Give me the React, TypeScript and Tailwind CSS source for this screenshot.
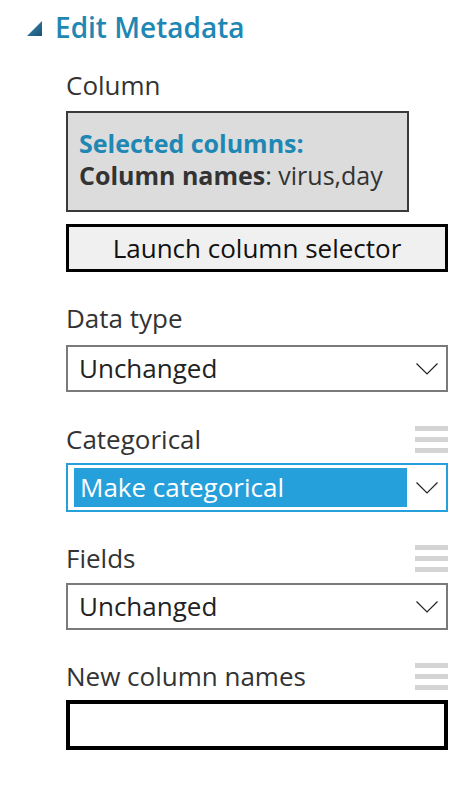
import React from "react";

const font = { fontFamily: '"Open Sans", "Noto Sans", sans-serif' };

// Little grey three-bar handle shown to the right of some labels.
function Handle() {
  return (
    <div className="flex w-[33px] flex-col gap-[6px]">
      <div className="h-[5px] bg-[#d4d4d4]" />
      <div className="h-[5px] bg-[#d4d4d4]" />
      <div className="h-[5px] bg-[#d4d4d4]" />
    </div>
  );
}

function Chevron() {
  return (
    <svg width="22" height="12" viewBox="0 0 22 12" fill="none" className="shrink-0">
      <path d="M0.5 0.5 L11 11 L21.5 0.5" stroke="#222" strokeWidth="1.2" />
    </svg>
  );
}

function Label({ text, handle, className = "" }: { text: string; handle?: boolean; className?: string }) {
  return (
    <div className={`flex h-[32px] items-center justify-between ${className}`}>
      <span className="text-[26px] leading-[32px] text-[#333]">{text}</span>
      {handle && <Handle />}
    </div>
  );
}

function Select({ value, active }: { value: string; active?: boolean }) {
  if (active) {
    return (
      <div className="flex h-[49px] items-center border-2 border-[#26a0da] py-[3px] pl-[6px] pr-[8px]">
        <div className="flex h-full flex-1 items-center bg-[#26a0da] pl-[6px] text-[26px] text-white">
          {value}
        </div>
        <div className="ml-[9px]">
          <Chevron />
        </div>
      </div>
    );
  }
  return (
    <div className="flex h-[47px] items-center justify-between border-2 border-[#7a7a7a] pl-[11px] pr-[8px]">
      <span className="text-[26px] text-[#222]">{value}</span>
      <Chevron />
    </div>
  );
}

export default function App() {
  return (
    <div className="h-[794px] w-[476px] bg-white pt-[9px]" style={font}>
      <div className="flex items-center pl-[27px]">
        <svg width="15" height="15" viewBox="0 0 15 15" className="mt-[3px]">
          <defs>
            <linearGradient id="tri" x1="0" y1="0" x2="1" y2="1">
              <stop offset="0" stopColor="#3a8fbf" />
              <stop offset="1" stopColor="#1b4f72" />
            </linearGradient>
          </defs>
          <polygon points="15,0 15,15 0,15" fill="url(#tri)" />
        </svg>
        <h1 className="ml-[13px] text-[28px] font-semibold leading-[36px] text-[#1e87b4]">Edit Metadata</h1>
      </div>

      <div className="ml-[66px] mr-[28px]">
        <Label text="Column" className="mt-[24px]" />

        <div className="mt-[10px] w-[343px] border-2 border-[#3a3a3a] bg-[#dcdcdc] pb-[19px] pl-[11px] pt-[14px] text-[25px] leading-[32px]">
          <div className="font-bold text-[#1e87b4]">Selected columns:</div>
          <div className="text-[#333]">
            <span className="font-bold">Column names</span>: virus,day
          </div>
        </div>

        <button className="mt-[12px] flex h-[48px] w-full items-center justify-center border-[3px] border-black bg-[#f0f0f0] text-[26px] text-[#111]">
          Launch column selector
        </button>

        <Label text="Data type" className="mt-[30px]" />
        <div className="mt-[11px]">
          <Select value="Unchanged" />
        </div>

        <Label text="Categorical" handle className="mt-[31px]" />
        <div className="mt-[8px]">
          <Select value="Make categorical" active />
        </div>

        <Label text="Fields" handle className="mt-[30px]" />
        <div className="mt-[9px]">
          <Select value="Unchanged" />
        </div>

        <Label text="New column names" handle className="mt-[30px]" />
        <div className="mt-[8px] h-[50px] border-[4px] border-black bg-white" />
      </div>
    </div>
  );
}
